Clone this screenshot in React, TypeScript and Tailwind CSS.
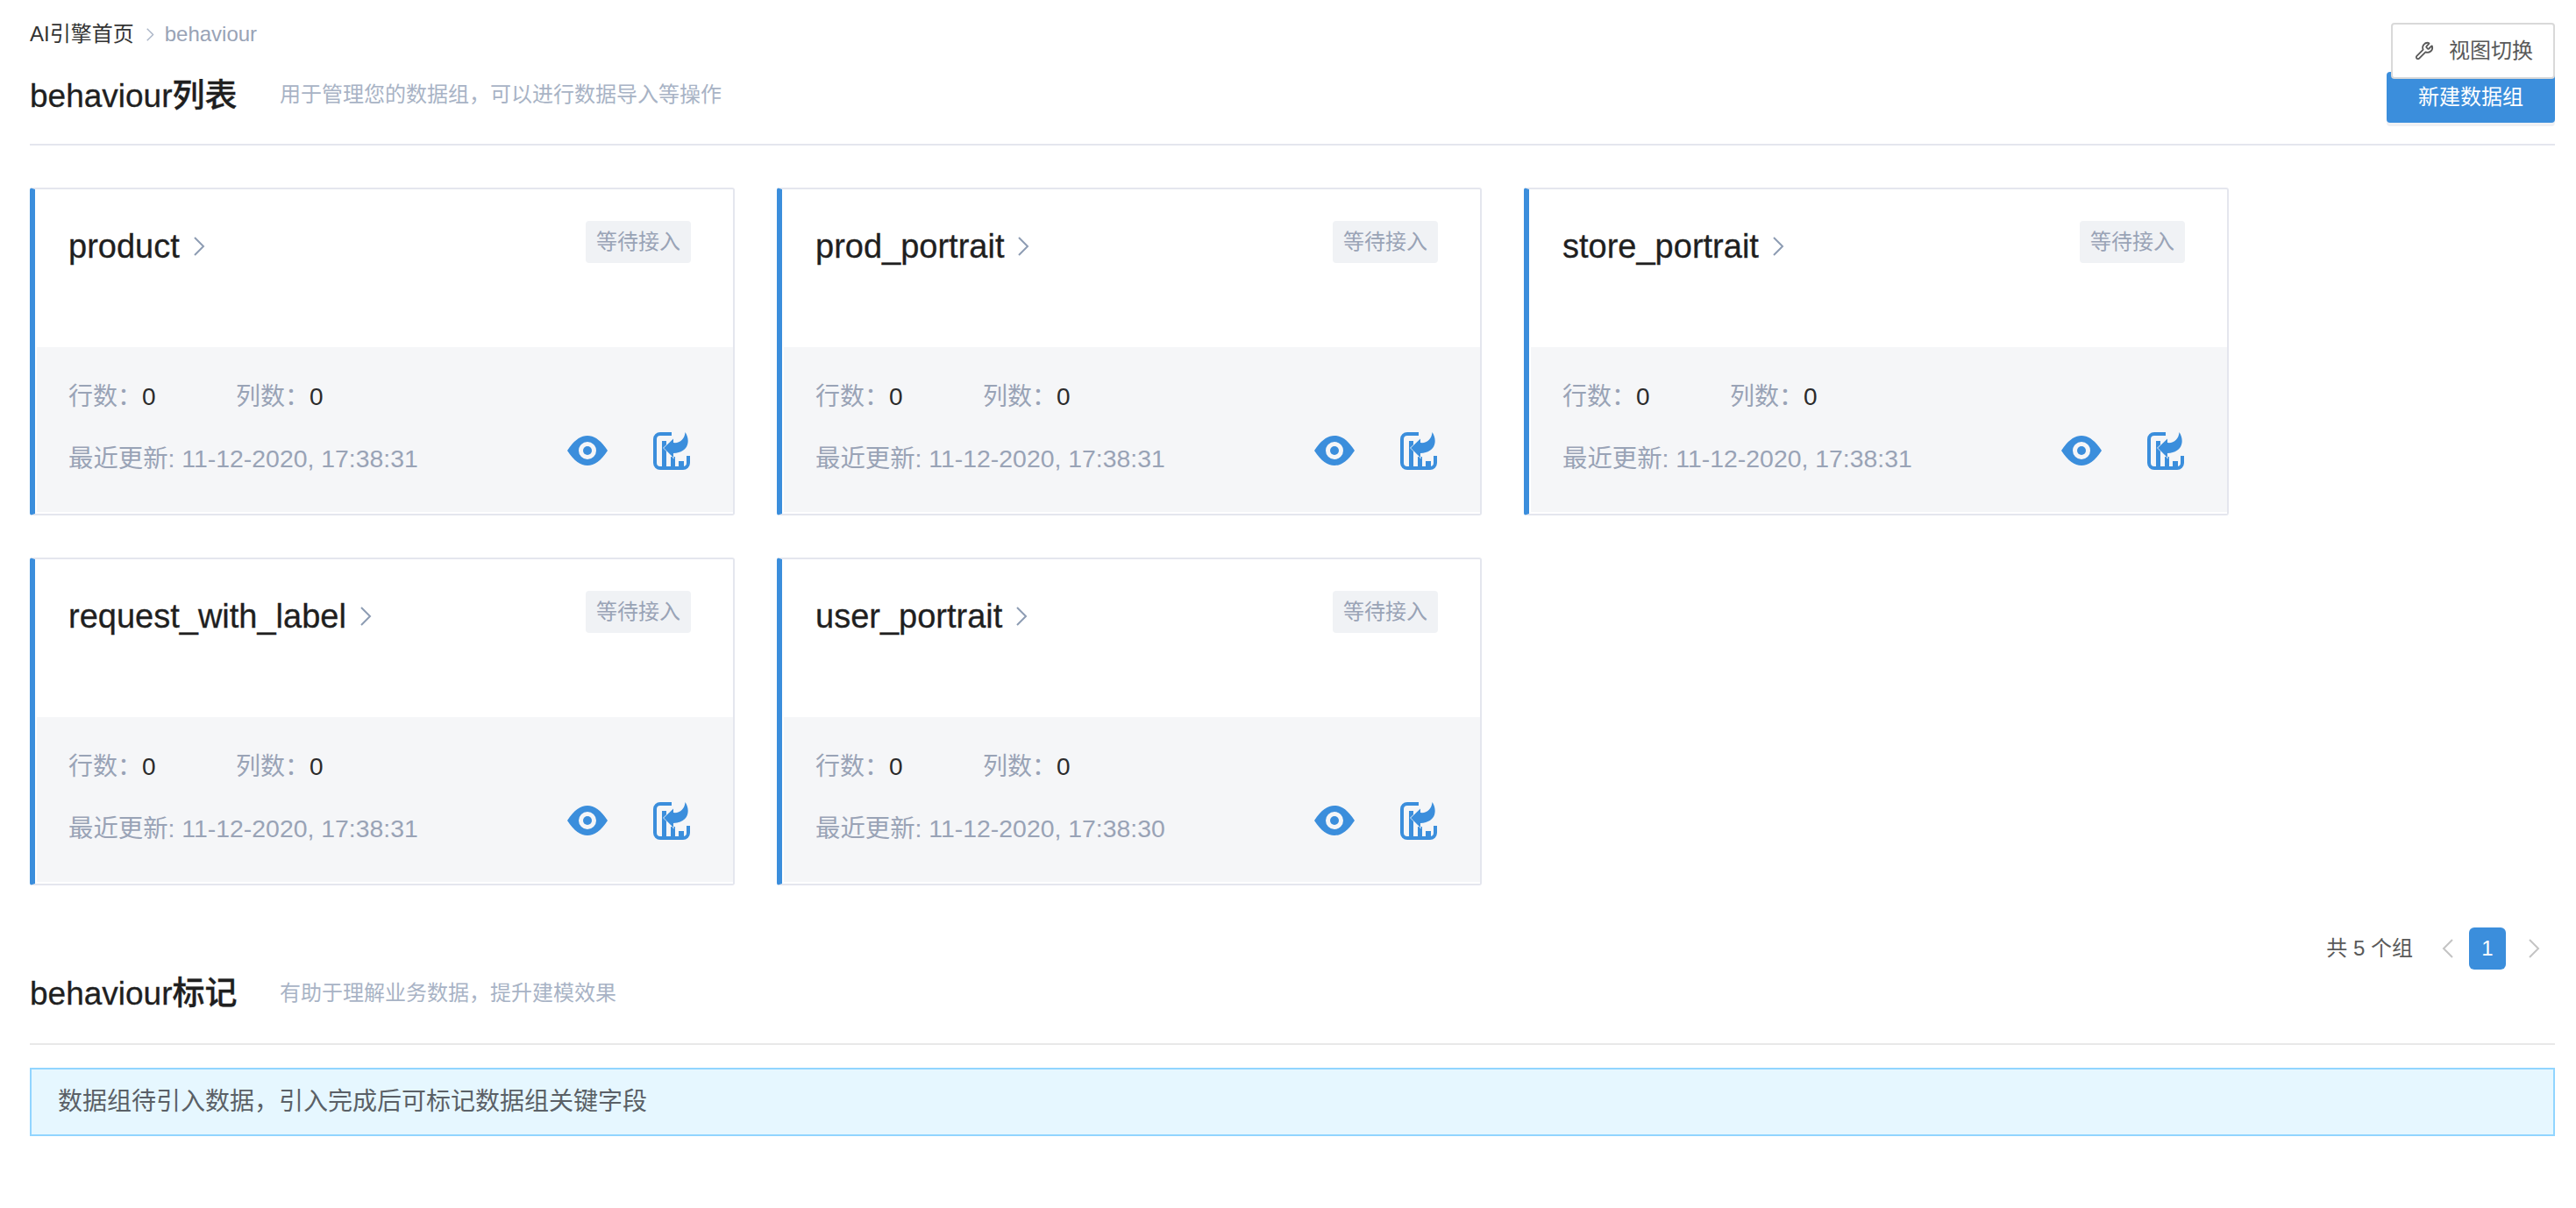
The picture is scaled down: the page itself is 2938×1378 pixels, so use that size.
import { Wrench } from 'lucide-react'

const cards = [
  { name: 'product', updated: '11-12-2020, 17:38:31' },
  { name: 'prod_portrait', updated: '11-12-2020, 17:38:31' },
  { name: 'store_portrait', updated: '11-12-2020, 17:38:31' },
  { name: 'request_with_label', updated: '11-12-2020, 17:38:31' },
  { name: 'user_portrait', updated: '11-12-2020, 17:38:30' },
]

function Chevron({ className, left }: { className: string; left?: boolean }) {
  return (
    <svg viewBox="0 0 13 22" fill="none" stroke="currentColor" strokeWidth="2" className={className}>
      <path d={left ? 'M12 1 2 11l10 10' : 'M1 1l10 10L1 21'} />
    </svg>
  )
}

function EyeIcon() {
  return (
    <svg viewBox="0 0 46 34" className="w-[46px] h-[34px] text-[#3b8edc]">
      <path
        fill="currentColor"
        fillRule="evenodd"
        d="M0 17C8 5 15 0 23 0s15 5 23 17c-8 12-15 17-23 17S8 29 0 17Zm23-10a10 10 0 1 0 0 20 10 10 0 0 0 0-20Z"
      />
      <circle cx="23" cy="17" r="5" fill="currentColor" />
    </svg>
  )
}

function ImportIcon() {
  return (
    <svg viewBox="0 0 42 43" className="w-[42px] h-[43px] text-[#3b8edc]">
      <path fill="none" stroke="currentColor" strokeWidth="4" d="M21 2H8a6 6 0 0 0-6 6v27a6 6 0 0 0 6 6h26a6 6 0 0 0 6-6V27" />
      <path fill="currentColor" d="M10 10h5v30h-5zM20 28h5v12h-5zM29 33h6v7h-6z" />
      <path
        fill="currentColor"
        stroke="#f5f6f8"
        strokeWidth="1.2"
        paintOrder="stroke"
        d="M12 18 23 7.500V12c7 1 13-4 13.500-12 5.500 8 5.500 23-13.500 24v5Z"
      />
    </svg>
  )
}

function Card({ name, updated }: { name: string; updated: string }) {
  return (
    <div className="h-[374px] flex flex-col border-2 border-l-[6px] border-[#e4e6ee] border-l-[#3b8edc] rounded-[3px] bg-white">
      <div className="flex-1 flex justify-between pl-[38px] pr-[48px]">
        <div className="flex items-center gap-[16px] h-[130px] text-[38px] text-[#1f1f1f] [-webkit-text-stroke:0.3px_#1f1f1f]">
          {name}
          <Chevron className="w-[13px] h-[22px] text-[#8d9cb3]" />
        </div>
        <div className="mt-[36px] h-[48px] w-[120px] flex items-center justify-center rounded-[4px] bg-[#f0f2f5] text-[24px] text-[#99a3b6]">
          等待接入
        </div>
      </div>
      <div className="h-[188px] mb-[2px] ml-[2px] bg-[#f5f6f8] pl-[36px] pr-[49px] pt-[36px]">
        <div className="flex items-center h-[42px] text-[28px] text-[#99a3b6]">
          <span className="w-[191px]">
            行数：<span className="text-[#2b2b2b]">0</span>
          </span>
          <span>
            列数：<span className="text-[#2b2b2b]">0</span>
          </span>
        </div>
        <div className="flex items-center justify-between h-[60px] mt-[10px] text-[28.4px] text-[#99a3b6]">
          <span className="mt-[18px]">最近更新: {updated}</span>
          <div className="flex items-center gap-[52px]">
            <EyeIcon />
            <ImportIcon />
          </div>
        </div>
      </div>
    </div>
  )
}

export default function App() {
  return (
    <div className="relative min-h-[1378px] bg-white pl-[34px] pr-[24px] pt-[20px] font-['Liberation_Sans','Noto_Sans_CJK_SC',sans-serif]">
      <button className="absolute z-10 top-[26px] right-[24px] w-[187px] h-[64px] flex items-center pl-[25px] gap-[17px] bg-white border-2 border-[#d9d9d9] rounded-[4px] text-[24px] text-[#595959]">
        <Wrench className="w-[22px] h-[22px]" strokeWidth={2} />
        视图切换
      </button>

      <nav className="h-[38px] flex items-center text-[24px] text-[#333333]">
        AI引擎首页
        <Chevron className="w-[9px] h-[15px] ml-[14px] mr-[12px] text-[#a8b3c5]" />
        <span className="text-[#99a3b6]">behaviour</span>
      </nav>

      <div className="mt-[24px] h-[58px] flex items-center justify-between">
        <div className="flex items-center -mt-[6px]">
          <h1 className="w-[285px] pt-[4px] text-[37px] font-medium text-[#1f1f1f] [-webkit-text-stroke:0.3px_#1f1f1f]">behaviour列表</h1>
          <p className="text-[24px] text-[#a8b3c5]">用于管理您的数据组，可以进行数据导入等操作</p>
        </div>
        <button className="w-[192px] h-[58px] rounded-[4px] bg-[#3b8edc] text-[24px] text-white shadow-[0_4px_0_#f0f1f4]">
          新建数据组
        </button>
      </div>
      <div className="mt-[24px] h-[2px] bg-[#e4e6ee]" />

      <div className="mt-[48px] grid grid-cols-[repeat(3,804px)] gap-x-[48px] gap-y-[48px]">
        {cards.map((c) => (
          <Card key={c.name} name={c.name} updated={c.updated} />
        ))}
      </div>

      <div className="mt-[48px] h-[48px] flex items-center justify-end pr-[17px] text-[24px] text-[#595959]">
        共 5 个组
        <Chevron className="w-[13px] h-[22px] ml-[33px] text-[#c4c4c4]" left />
        <span className="mx-[18px] w-[42px] h-[48px] flex items-center justify-center rounded-[6px] bg-[#3b8edc] text-white">1</span>
        <Chevron className="w-[13px] h-[22px] ml-[8px] text-[#c4c4c4]" />
      </div>

      <div className="h-[54px] flex items-center">
        <h2 className="w-[285px] pt-[2px] text-[37px] font-medium text-[#1f1f1f] [-webkit-text-stroke:0.3px_#1f1f1f]">behaviour标记</h2>
        <p className="text-[24px] text-[#a8b3c5]">有助于理解业务数据，提升建模效果</p>
      </div>
      <div className="mt-[30px] h-[2px] bg-[#e8e8e8]" />

      <div className="mt-[26px] h-[78px] flex items-center pl-[30px] border-2 border-[#91d5ff] bg-[#e6f7ff] text-[28px] text-[#5a6066]">
        数据组待引入数据，引入完成后可标记数据组关键字段
      </div>
    </div>
  )
}
